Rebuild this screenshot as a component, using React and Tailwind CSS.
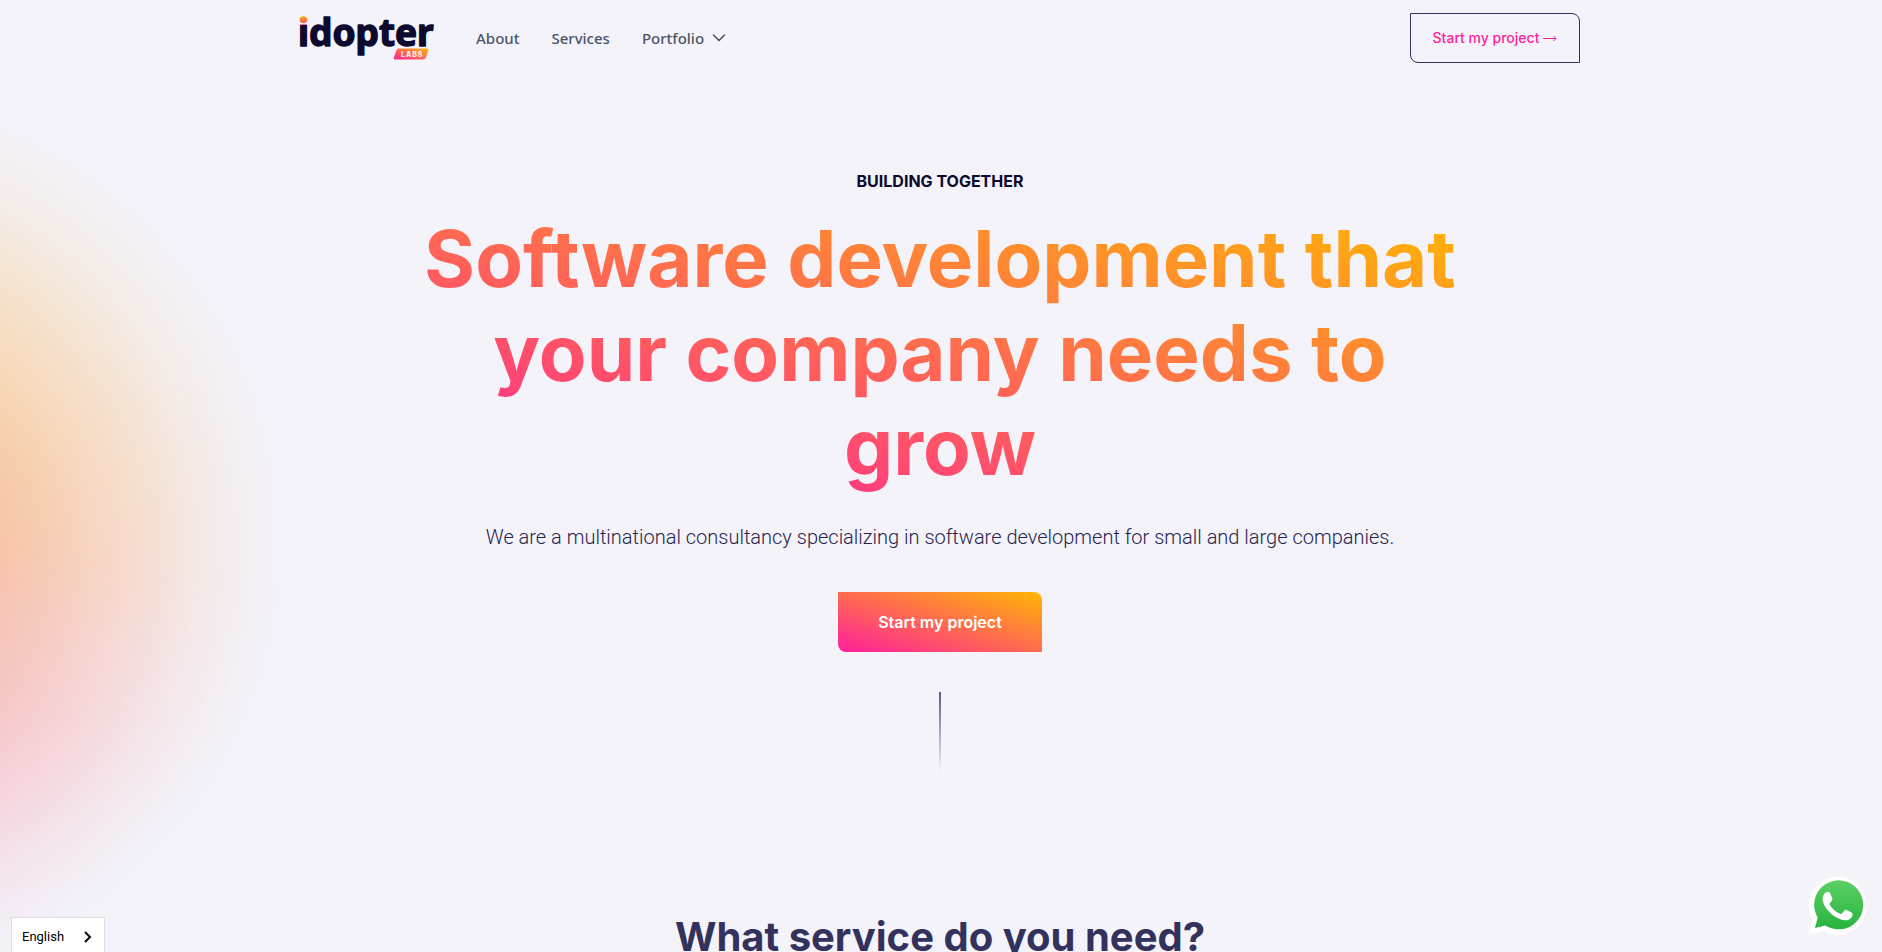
import React from "react";

const navText = "font-['Noto_Sans',sans-serif] text-[15px] font-medium text-[#4a5568]";

function Logo() {
  return (
    <a href="#home" aria-label="idopter labs" className="-ml-1 block">
      <svg width="144" height="46" viewBox="-4 -1 144 46">
        <defs>
          <linearGradient id="stem" gradientUnits="userSpaceOnUse" x1="0" y1="1" x2="0" y2="33">
            <stop offset="0" stopColor="#ffa41b" />
            <stop offset="0.26" stopColor="#ff3d78" />
            <stop offset="0.26" stopColor="#0c0a2e" />
            <stop offset="1" stopColor="#0c0a2e" />
          </linearGradient>
          <linearGradient id="badge" x1="0" y1="1" x2="1" y2="0">
            <stop offset="0" stopColor="#ff1f9c" />
            <stop offset="1" stopColor="#ffb703" />
          </linearGradient>
        </defs>
        <text
          x="-2"
          y="30"
          fill="#0c0a2e"
          stroke="#0c0a2e"
          strokeWidth="1.400"
          strokeLinejoin="round"
          fontSize="37"
          fontWeight="700"
          fontFamily="'Noto Sans', sans-serif"
        >
          <tspan fill="url(#stem)" stroke="url(#stem)">i</tspan>dopter
        </text>
        <path d="M98.500 32.500h28.500q2 0 1.400 1.800l-2.600 7.400q-.6 1.800-2.600 1.800h-28q-2 0-1.400-1.800l2.600-7.400q.6-1.800 2.100-1.800z" fill="url(#badge)" />
        <text x="101" y="40.500" fill="#fff" fontSize="7" fontWeight="700" letterSpacing="1" fontFamily="Inter, sans-serif">
          LABS
        </text>
      </svg>
    </a>
  );
}

function Header() {
  return (
    <header className="mx-auto flex h-19 w-full max-w-7xl items-center">
      <Logo />
      <nav className="ml-9 flex items-center gap-8">
        <a href="#about" className={navText}>About</a>
        <a href="#services" className={navText}>Services</a>
        <button type="button" className={`flex items-center gap-2 ${navText}`}>
          Portfolio
          <svg width="14" height="14" viewBox="0 0 14 14" fill="none" stroke="currentColor" strokeWidth="1.600" strokeLinecap="round" strokeLinejoin="round">
            <path d="M1.500 4 7 9.500l5.500-5.500" />
          </svg>
        </button>
      </nav>
      <a
        href="#project"
        className="ml-auto flex h-[50px] w-[170px] items-center justify-center gap-1 rounded-tr-lg rounded-bl-lg border border-[#32325d] font-[Inter,sans-serif] text-sm font-medium text-[#ff1f9c]"
      >
        Start my project
        <svg width="14" height="8" viewBox="0 0 14 8" fill="none" stroke="currentColor" strokeWidth="1">
          <path d="M0 4.500h13M10.500 2 13 4.500 10.500 7" />
        </svg>
      </a>
    </header>
  );
}

function Hero() {
  return (
    <section className="flex flex-col items-center px-4 pt-[93px] text-center">
      <p className="font-[Inter,sans-serif] text-base font-bold text-[#0c0a2e]">BUILDING TOGETHER</p>
      <h1 className="mt-[19px] max-w-[1066px] bg-[linear-gradient(to_top_right,#ff1f9c,#ffb703)] bg-clip-text font-[Inter,sans-serif] text-[78px] leading-[94px] font-[650] text-transparent [font-optical-sizing:none]">
        Software development that your company needs to grow
      </h1>
      <p className="mt-7 font-[Roboto,sans-serif] text-xl leading-[30px] font-light text-[#26244e]">
        We are a multinational consultancy specializing in software development for small and large companies.
      </p>
      <a
        href="#project"
        className="mt-10 flex h-15 items-center rounded-tr-lg rounded-bl-lg bg-[linear-gradient(to_top_right,#ff1f9c,#ffb703)] px-10 font-[Inter,sans-serif] text-base font-semibold text-white"
      >
        Start my project
      </a>
      <div className="mt-10 h-20 w-0.5 bg-linear-to-b from-[#5a5a85] to-transparent" />
    </section>
  );
}

function WhatsApp() {
  return (
    <a href="#whatsapp" aria-label="WhatsApp" className="fixed right-4 bottom-4 block">
      <svg width="58" height="60" viewBox="0 0 58 60">
        <defs>
          <linearGradient id="wa" x1="0" y1="0" x2="0" y2="1">
            <stop offset="0" stopColor="#5bd066" />
            <stop offset="1" stopColor="#27b43e" />
          </linearGradient>
        </defs>
        <path d="M0 59 4.200 43.500A29 29 0 1 1 15.500 55z" fill="#fff" />
        <path d="M7 52 9.700 41.500A24.500 24.500 0 1 1 17.500 49.500z" fill="url(#wa)" />
        <path
          d="M18.500 16c1.600-.7 3-.4 3.700 1.300l2 4.700c.5 1.200.2 2-.5 2.900l-1.800 2.200c-.5.6-.5 1-.1 1.700 2.600 4.300 6 7.100 10.500 9 .7.300 1.200.2 1.700-.4l2.400-2.900c.6-.8 1.200-.9 2.100-.5l5 2.400c1.200.6 1.300 1.200 1 2.800-.8 3.600-4.300 5.300-7.600 5-4-.4-9.500-2.800-13.500-6.300-4.200-3.700-7.500-8.200-8.500-12.400-.9-3.800.4-8 3.600-9.500z"
          fill="#fff"
        />
      </svg>
    </a>
  );
}

export default function App() {
  return (
    <div className="relative min-h-screen overflow-hidden bg-[#f4f3fa]">
      <div
        aria-hidden="true"
        className="absolute top-[60px] left-0 h-[960px] w-[282px] bg-[linear-gradient(195deg,#ffa015_30%,#ff8c15_44%,#ff7a20_54%,#ff7040_61%,#ff5c50_72%,#ff5070_84%,#ff3a9a)] [mask-image:radial-gradient(circle_at_-170px_480px,rgb(0_0_0/0.6)_0,rgb(0_0_0/0.38)_170px,rgb(0_0_0/0.2)_300px,rgb(0_0_0/0.09)_370px,rgb(0_0_0/0.02)_430px,transparent_455px)]"
      />
      <div className="relative pr-0.5">
        <Header />
        <main>
          <Hero />
          <section className="mt-[141px] pb-16 text-center">
            <h2 className="font-[Inter,sans-serif] text-[40px] leading-12 font-[650] text-[#32325d] [font-optical-sizing:none]">
              What service do you need?
            </h2>
          </section>
        </main>
      </div>
      <button
        type="button"
        className="fixed bottom-0 left-[11px] flex h-[35px] w-[94px] items-center justify-between border border-b-0 border-[#dcdce0] bg-white pt-1 pr-3 pl-2.5 font-[Roboto,sans-serif] text-[13px] text-black"
      >
        English
        <svg width="9" height="12" viewBox="0 0 9 12" fill="none" stroke="currentColor" strokeWidth="2">
          <path d="M2 1l5 5-5 5" />
        </svg>
      </button>
      <WhatsApp />
    </div>
  );
}
